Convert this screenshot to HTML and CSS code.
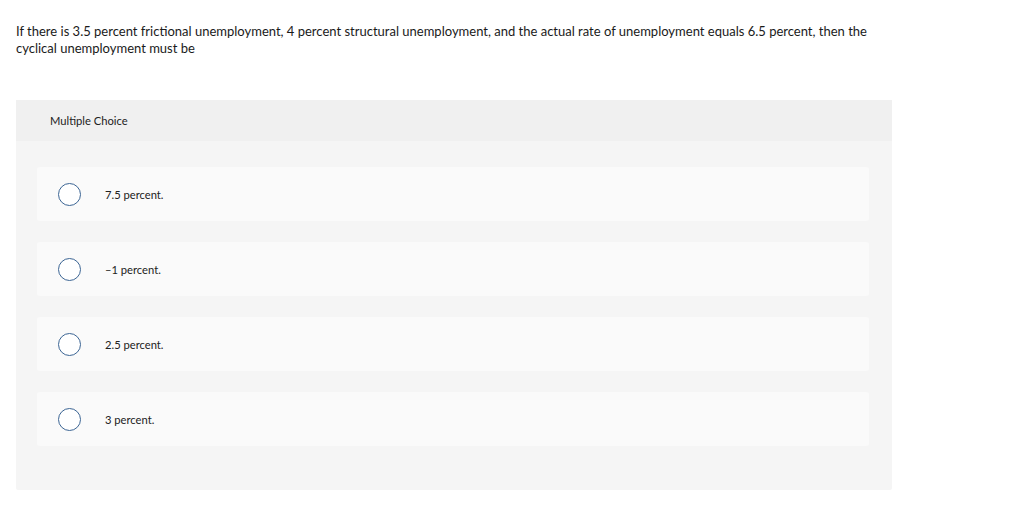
FILE: index.html
```html
<!DOCTYPE html>
<html>
<head>
<meta charset="utf-8">
<link rel="stylesheet" href="styles.css">
</head>
<body>
<div class="page">
  <p class="question">If there is 3.5 percent frictional unemployment, 4 percent structural unemployment, and the actual rate of unemployment equals 6.5 percent, then the cyclical unemployment must be</p>
  <div class="panel">
    <div class="panel-head">Multiple Choice</div>
    <div class="options">
      <div class="option"><span class="radio"></span><span class="label">7.5 percent.</span></div>
      <div class="option"><span class="radio"></span><span class="label">–1 percent.</span></div>
      <div class="option"><span class="radio"></span><span class="label">2.5 percent.</span></div>
      <div class="option"><span class="radio"></span><span class="label">3 percent.</span></div>
    </div>
  </div>
</div>
</body>
</html>
```
FILE: styles.css
```css
html, body {
  margin: 0;
  padding: 0;
  background: #ffffff;
}
body {
  font-family: Lato, "Liberation Sans", sans-serif;
  color: #222;
}
.page {
  padding: 23px 16px 0 16px;
}
.question {
  margin: 0;
  width: 870px;
  font-size: 13px;
  line-height: 17px;
  color: #1a1a1a;
}
.panel {
  margin-top: 43px;
  width: 876px;
  background: #f5f5f5;
  border-radius: 2px;
  padding-bottom: 44px;
}
.panel-head {
  height: 41px;
  box-sizing: border-box;
  padding-left: 34px;
  display: flex;
  align-items: center;
  background: #f0f0f0;
  font-size: 11.2px;
  color: #222;
}
.options {
  padding: 26px 23px 0 21px;
  display: flex;
  flex-direction: column;
  gap: 21px;
}
.option {
  height: 54px;
  background: #fafafa;
  border-radius: 3px;
  display: flex;
  align-items: center;
  padding-left: 21px;
}
.radio {
  width: 23px;
  height: 23px;
  box-sizing: border-box;
  border: 1px solid #3c6594;
  border-radius: 50%;
  background: #fff;
  flex: none;
}
.label {
  margin-left: 24px;
  font-size: 11.2px;
  color: #222;
}
```
